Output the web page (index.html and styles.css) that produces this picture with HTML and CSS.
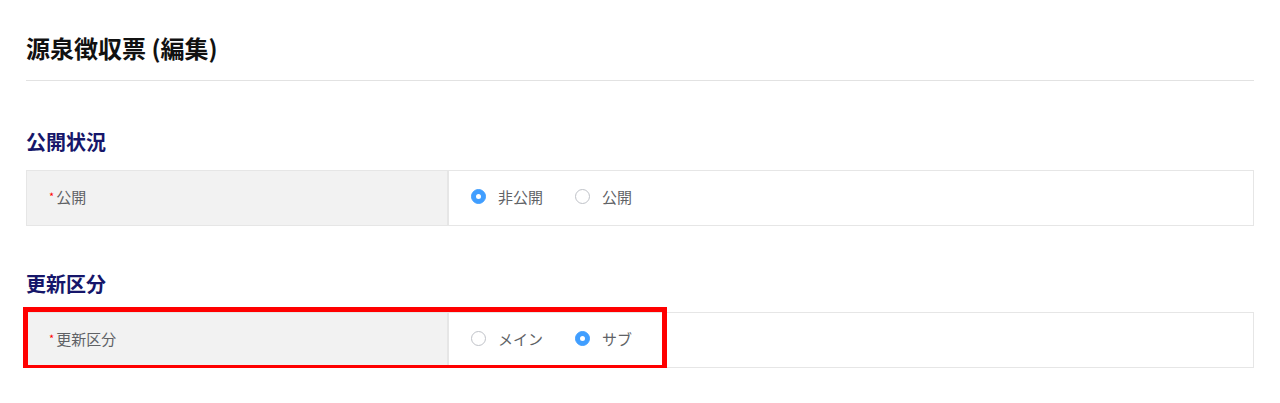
FILE: index.html
```html
<!DOCTYPE html>
<html lang="ja">
<head>
  <meta charset="UTF-8">
  <meta name="viewport" content="width=device-width, initial-scale=1.0">
  <title>源泉徴収票 (編集)</title>
  <link rel="stylesheet" href="styles.css">
</head>
<body>

<div class="page">
  <header class="page-header">
    <h1>源泉徴収票 (編集)</h1>
  </header>

  <section class="section section-first">
    <h2 class="section-title">公開状況</h2>
    <div class="form-row">
      <div class="form-label"><span class="required">*</span>公開</div>
      <div class="form-value">
        <label class="radio checked"><span class="radio-dot"></span>非公開</label>
        <label class="radio"><span class="radio-dot"></span>公開</label>
      </div>
    </div>
  </section>

  <section class="section">
    <h2 class="section-title">更新区分</h2>
    <div class="form-row">
      <div class="form-label"><span class="required">*</span>更新区分</div>
      <div class="form-value">
        <label class="radio"><span class="radio-dot"></span>メイン</label>
        <label class="radio checked"><span class="radio-dot"></span>サブ</label>
      </div>
      <!-- highlight frame -->
      <div class="highlight"></div>
    </div>
  </section>
</div>

</body>
</html>
```

FILE: styles.css
```css
body {
  font-family: "Noto Sans CJK JP", "Noto Sans", sans-serif;
  margin: 0;
  padding: 0;
  background: #fff;
  color: #606266;
}
.page {
  padding: 0 26px;
}
.page-header {
  padding-top: 31px;
  padding-bottom: 16px;
  border-bottom: 1px solid #e2e2e2;
}
.page-header h1 {
  margin: 0;
  font-size: 24px;
  line-height: 33px;
  font-weight: bold;
  color: #111;
}
.section {
  margin-top: 46px;
}
.section-first {
  margin-top: 49px;
}
.section-title {
  margin: 0 0 16px;
  font-size: 20px;
  line-height: 24px;
  font-weight: bold;
  color: #16166a;
}
.form-row {
  position: relative;
  display: flex;
  height: 56px;
  box-sizing: border-box;
  border: 1px solid #e6e6e6;
}
.form-label {
  width: 422px;
  display: flex;
  align-items: center;
  padding: 0 0 3px 22px;
  box-sizing: border-box;
  background: #f2f2f2;
  border-right: 2px solid #e6e6e6;
  font-size: 15px;
}
.required {
  color: #ff0000;
  font-size: 11px;
  margin-right: 2px;
  position: relative;
  top: -1px;
}
.form-value {
  display: flex;
  align-items: center;
  padding: 0 0 3px 22px;
  font-size: 15px;
}
.radio {
  display: flex;
  align-items: center;
  margin-right: 32px;
  cursor: pointer;
}
.radio-dot {
  width: 13px;
  height: 13px;
  border: 1px solid #bfc2c8;
  border-radius: 50%;
  margin-right: 12px;
  box-sizing: content-box;
  position: relative;
}
.radio.checked .radio-dot {
  background: #409eff;
  border-color: #409eff;
}
.radio.checked .radio-dot::after {
  content: "";
  position: absolute;
  left: 4px;
  top: 4px;
  width: 5px;
  height: 5px;
  border-radius: 50%;
  background: #fff;
}
.highlight {
  position: absolute;
  left: -4px;
  top: -6px;
  width: 634px;
  height: 53px;
  border: 5px solid #ff0000;
  pointer-events: none;
}
```
